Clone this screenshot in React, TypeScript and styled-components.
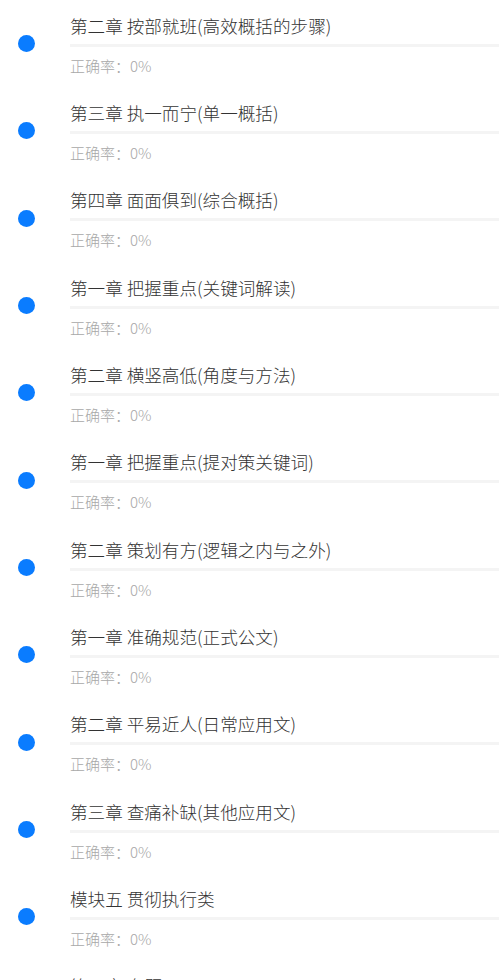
import React from "react";
import styled, { createGlobalStyle } from "styled-components";

const GlobalStyle = createGlobalStyle`
  html, body {
    margin: 0;
    padding: 0;
    background: #ffffff;
    overflow: hidden;
  }
  body {
    font-family: "Noto Sans CJK SC", "Noto Sans", sans-serif;
  }
`;

const List = styled.div`
  display: flex;
  flex-direction: column;
  width: 499px;
`;

const Row = styled.div`
  display: flex;
  align-items: center;
  height: 87.33px;
  box-sizing: border-box;
`;

const DotCol = styled.div`
  width: 70px;
  flex: none;
  display: flex;
  padding-left: 18px;
  box-sizing: border-box;
`;

const Dot = styled.span`
  width: 17px;
  height: 17px;
  border-radius: 50%;
  background: #0a7cff;
`;

const Content = styled.div`
  flex: 1;
  display: flex;
  flex-direction: column;
  padding-top: 2px;
`;

const Title = styled.div`
  font-size: 17.6px;
  line-height: 24px;
  font-weight: 300;
  color: #333333;
  white-space: nowrap;
`;

const Bar = styled.div`
  height: 3px;
  margin-top: 6px;
  background: #f4f4f4;
`;

const Rate = styled.div`
  margin-top: 9px;
  font-size: 15px;
  line-height: 20px;
  font-weight: 300;
  color: #a8a8a8;
`;

const items = [
  "第二章 按部就班(高效概括的步骤)",
  "第三章 执一而宁(单一概括)",
  "第四章 面面俱到(综合概括)",
  "第一章 把握重点(关键词解读)",
  "第二章 横竖高低(角度与方法)",
  "第一章 把握重点(提对策关键词)",
  "第二章 策划有方(逻辑之内与之外)",
  "第一章 准确规范(正式公文)",
  "第二章 平易近人(日常应用文)",
  "第三章 查痛补缺(其他应用文)",
  "模块五 贯彻执行类",
  "第一章 专题",
];

export default function App() {
  return (
    <>
      <GlobalStyle />
      <List>
        {items.map((t, i) => (
          <Row key={i}>
            <DotCol>
              <Dot />
            </DotCol>
            <Content>
              <Title>{t}</Title>
              <Bar />
              <Rate>正确率：0%</Rate>
            </Content>
          </Row>
        ))}
      </List>
    </>
  );
}
